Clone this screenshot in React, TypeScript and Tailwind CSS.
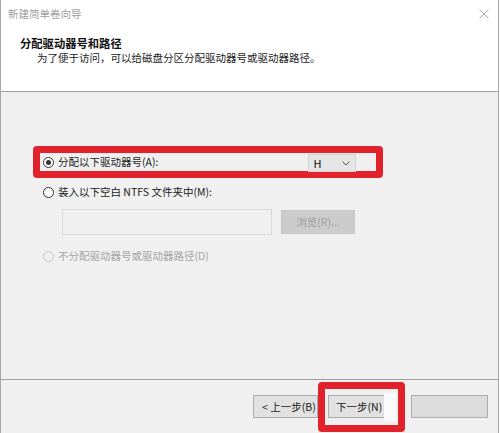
import React from 'react';

const font = { fontFamily: '"Noto Sans CJK SC", "Noto Sans", sans-serif' };

const Radio: React.FC<{ checked?: boolean; disabled?: boolean }> = ({ checked, disabled }) => (
  <span
    className={`flex h-[11px] w-[11px] shrink-0 items-center justify-center rounded-full border ${
      disabled ? 'border-[#c4c4c4] bg-[#f0f0f0]' : 'border-[#333333] bg-white'
    }`}
  >
    {checked && <span className="h-[5px] w-[5px] rounded-full bg-[#333333]" />}
  </span>
);

export default function App() {
  return (
    <div
      style={font}
      className="flex h-[433px] w-[499px] flex-col border-l border-r border-[#a8a8a8] bg-white text-[10.5px] text-[#1a1a1a]"
    >
      {/* title bar */}
      <div className="flex h-[30px] items-start justify-between pl-[7px] pr-[9px] pt-[6px]">
        <span className="leading-[16px] text-[#a0a0a0]">新建简单卷向导</span>
        <svg width="10" height="10" viewBox="0 0 10 10" className="mt-[3px]">
          <path d="M0.5 0.5 L9.5 9.5 M9.5 0.5 L0.5 9.5" stroke="#a8a8a8" strokeWidth="1" fill="none" />
        </svg>
      </div>

      {/* page header */}
      <div className="flex h-[62px] flex-col border-b border-[#a0a0a0] pl-[19px]">
        <div className="mt-[5px] text-[11.3px] font-bold leading-[16px] text-[#111]">分配驱动器号和路径</div>
        <div className="ml-[17px] leading-[14px] text-[#222]">为了便于访问，可以给磁盘分区分配驱动器号或驱动器路径。</div>
      </div>

      {/* options */}
      <div className="flex flex-1 flex-col border-b border-[#a0a0a0] bg-[#f0f0f0] pl-[32px] pt-[54px]">
        <div className="flex h-[32px] w-[350px] items-center rounded-[4px] border-[7px] border-[#e1222c] pl-[3px]">
          <Radio checked />
          <span className="ml-[4px] leading-[14px]">分配以下驱动器号(A):</span>
          <div className="ml-[150px] mt-[2px] flex h-[18px] w-[48px] items-center justify-between border border-[#d4d4d4] bg-[#e5e5e5] pl-[4px] pr-[5px]">
            <span className="text-[11px] leading-[14px] text-[#111]">H</span>
            <svg width="8" height="5" viewBox="0 0 8 5">
              <path d="M0.5 0.5 L4 4 L7.5 0.5" stroke="#555" strokeWidth="1" fill="none" />
            </svg>
          </div>
        </div>

        <div className="ml-[10px] mt-[6px] flex h-[16px] items-center">
          <Radio />
          <span className="ml-[4px] leading-[14px]">装入以下空白 NTFS 文件夹中(M):</span>
        </div>

        <div className="ml-[29px] mt-[9px] flex h-[26px] items-center gap-[9px]">
          <div className="h-[26px] w-[210px] border border-[#d9d9d9] bg-[#f0f0f0]" />
          <div className="flex h-[24px] w-[74px] items-center justify-center border border-[#c8c8c8] bg-[#cccccc] text-[#a0a0a0]">
            浏览(R)...
          </div>
        </div>

        <div className="ml-[10px] mt-[13px] flex h-[16px] items-center">
          <Radio disabled />
          <span className="ml-[4px] leading-[14px] text-[#a4a4a4]">不分配驱动器号或驱动器路径(D)</span>
        </div>
      </div>

      {/* wizard buttons */}
      <div className="flex h-[53px] items-center justify-end bg-[#f0f0f0] pr-[10px]">
        <div className="flex h-[23px] w-[65px] items-center border border-[#adadad] bg-[#e1e1e1] pl-[8px]">
          &lt; 上一步(B)
        </div>
        <div className="flex h-[50px] w-[87px] items-center rounded-[4px] border-[7px] border-[#e1222c] pl-[3px]">
          <div className="flex h-[23px] w-[56px] items-center border-y border-l border-[#adadad] bg-[#e1e1e1] pl-[7px]">
            下一步(N)
          </div>
          <div className="h-[28px] w-[12px] bg-[#fafafa]" />
        </div>
        <div className="ml-[6px] h-[23px] w-[77px] border border-[#adadad] bg-[#dcdcdc]" />
      </div>
    </div>
  );
}
